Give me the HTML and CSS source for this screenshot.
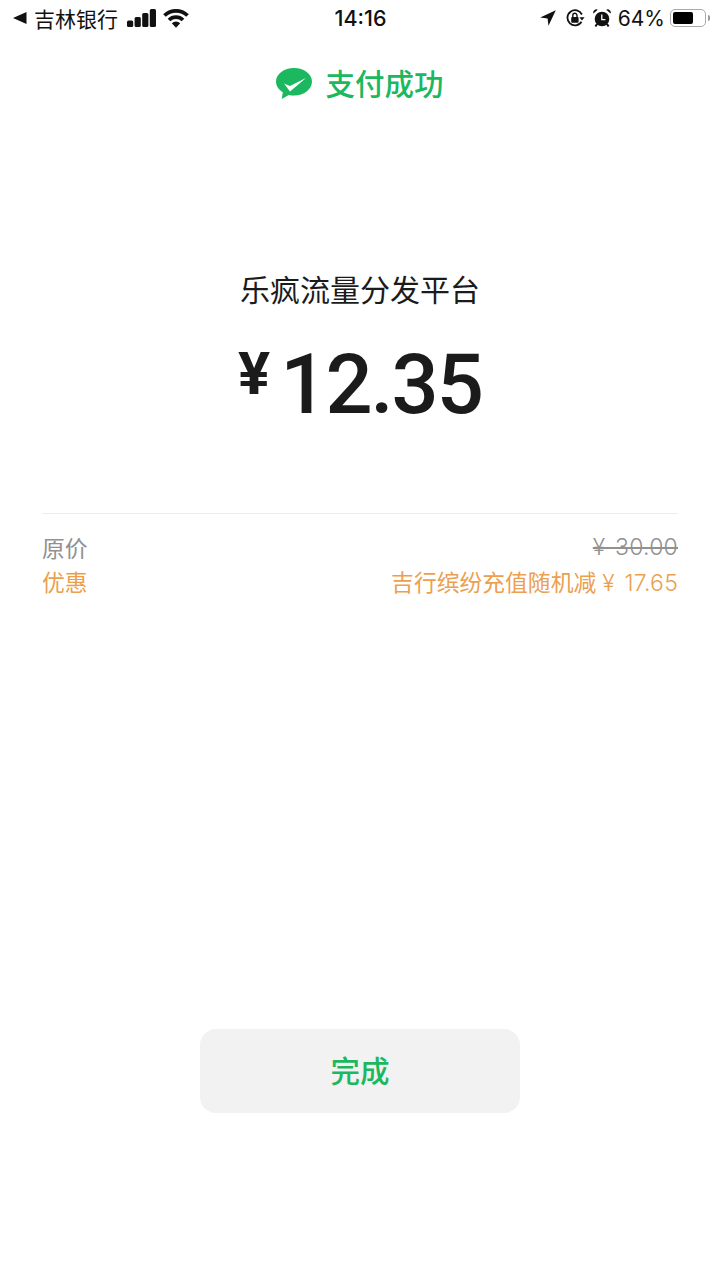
FILE: index.html
```html
<!DOCTYPE html>
<html lang="zh-CN">

<head>
	<meta charset="utf-8">
	<meta name="viewport" content="width=device-width, initial-scale=1.0">
	<title>支付成功</title>
	<link rel="stylesheet" href="styles.css">
</head>

<body>
	<header class="status_bar">
		<div class="status_left">
			<svg class="back_icon" width="14" height="12" viewBox="0 0 14 12"><path d="M0 6 13.5 0V12Z" fill="#111"/></svg>
			<span class="carrier">吉林银行</span>
			<svg class="signal_icon" width="30" height="18" viewBox="0 0 30 18">
				<rect x="0" y="11.500" width="6.200" height="6.500" rx="1.500" fill="#111"/>
				<rect x="7.600" y="8" width="6.200" height="10" rx="1.500" fill="#111"/>
				<rect x="15.200" y="4" width="6.200" height="14" rx="1.500" fill="#111"/>
				<rect x="22.800" y="0" width="6.200" height="18" rx="1.500" fill="#111"/>
			</svg>
			<svg class="wifi_icon" width="26" height="20" viewBox="0 0 26 20">
				<path d="M1.500 7.500a16.500 16.500 0 0 1 23 0" fill="none" stroke="#111" stroke-width="3.800"/>
				<path d="M6 12a10 10 0 0 1 14 0" fill="none" stroke="#111" stroke-width="3.800"/>
				<path d="M8.800 15.200a5.800 5.800 0 0 1 8.400 0L13 19.800Z" fill="#111"/>
			</svg>
		</div>
		<div class="clock">14:16</div>
		<div class="status_right">
			<svg width="16" height="16" viewBox="0 0 16 16"><path d="M15.800 .2 .2 7.500 7.600 8.400 8.500 15.800Z" fill="#111"/></svg>
			<svg class="lock_icon" width="19" height="18" viewBox="0 0 19 18">
				<path d="M15.500 12.800A7.600 7.600 0 1 1 15.900 5.500" fill="none" stroke="#111" stroke-width="1.800"/>
				<path d="M13.400 8.200h5.200l-2.600 3.400Z" fill="#111"/>
				<rect x="5.200" y="8" width="7.400" height="5.800" rx="1" fill="#111"/>
				<path d="M6.800 8V6.400a2.100 2.100 0 0 1 4.200 0V8" fill="none" stroke="#111" stroke-width="1.400"/>
			</svg>
			<svg class="alarm_icon" width="18" height="18" viewBox="0 0 18 18">
				<circle cx="9" cy="10" r="7.300" fill="#111"/>
				<path d="M.4 4.600 4.800 .8A3.100 3.100 0 0 0 .4 4.600ZM17.600 4.600 13.200 .8A3.100 3.100 0 0 1 17.600 4.600Z" fill="#111"/>
				<path d="M4 15 2.400 17.500M14 15 15.600 17.500" stroke="#111" stroke-width="2"/>
				<path d="M8.800 5.600V10.600H12.400" fill="none" stroke="#fff" stroke-width="1.300"/>
			</svg>
			<span class="battery_text">64%</span>
			<div class="battery">
				<div class="battery_level"></div>
			</div>
			<div class="battery_nub"></div>
		</div>
	</header>

	<main>
		<div class="result_title">
			<svg class="wechat_icon" width="36" height="32" viewBox="0 0 36 32">
				<path d="M18 0C8 0 0 5.900 0 13.500 0 17.900 2.700 21.700 6.800 24.200L5.800 31 12.800 27C14.500 27.400 16.200 27.600 18 27.600 28 27.600 36 21.200 36 13.500 36 5.900 28 0 18 0Z" fill="#1bb85f"/>
				<path d="M8 15.500 14 18 30 10 14 23.500Z" fill="#fff"/>
			</svg>
			<span class="title_text">支付成功</span>
		</div>

		<h1 class="merchant">乐疯流量分发平台</h1>
		<div class="amount"><span class="yen">¥</span><span class="amount_value">12.35</span></div>

		<section class="details">
			<div class="detail_row muted">
				<span>原价</span>
				<s class="num">¥ 30.00</s>
			</div>
			<div class="detail_row discount">
				<span>优惠</span>
				<span>吉行缤纷充值随机减<span class="num discount_num">¥ 17.65</span></span>
			</div>
		</section>

		<button class="done_button">完成</button>
	</main>
</body>

</html>
```

FILE: styles.css
```css
* {
	margin: 0;
	box-sizing: border-box;
}

body {
	width: 720px;
	height: 1280px;
	background: #fff;
	color: #1b1b1b;
	font-family: "Noto Sans CJK SC", "Noto Sans", sans-serif;
	overflow: hidden;
}

.status_bar {
	display: grid;
	grid-template-columns: 1fr auto 1fr;
	align-items: center;
	height: 36px;
	padding: 0 10px 0 13px;
	color: #111;
}

.status_left,
.status_right {
	display: flex;
	align-items: center;
}

.status_right {
	justify-content: flex-end;
}

.carrier {
	margin: 0 9px 0 7px;
	font-size: 21px;
	line-height: 1;
}

.wifi_icon {
	margin-left: 6px;
}

.clock {
	margin-right: 2px;
	font-family: Inter, sans-serif;
	font-size: 21.500px;
	font-weight: 500;
}

.lock_icon {
	margin-left: 10px;
}

.alarm_icon {
	margin-left: 8px;
}

.battery_text {
	margin-left: 7px;
	font-family: Inter, sans-serif;
	font-size: 21px;
}

.battery {
	width: 36px;
	height: 18px;
	margin-left: 5px;
	padding: 2px;
	border: 1.500px solid #aaa;
	border-radius: 5px;
}

.battery_level {
	width: 20px;
	height: 100%;
	background: #000;
	border-radius: 2px;
}

.battery_nub {
	width: 2px;
	height: 6px;
	margin-left: 2px;
	background: #999;
	border-radius: 0 2px 2px 0;
}

main {
	display: flex;
	flex-direction: column;
	align-items: center;
}

.result_title {
	display: flex;
	align-items: center;
	gap: 13px;
	height: 40px;
	margin-top: 28px;
	color: #1bb85f;
	font-size: 29.500px;
	font-weight: 500;
}

.title_text {
	margin-top: -4px;
}

.merchant {
	margin-top: 160px;
	font-size: 30px;
	font-weight: 400;
	line-height: 48px;
}

.amount {
	display: flex;
	align-items: flex-start;
	height: 90px;
	margin-top: 28px;
	font-family: Roboto, sans-serif;
	font-weight: 500;
}

.yen {
	margin-right: 10px;
	font-size: 60px;
	font-weight: 700;
	line-height: 68px;
}

.amount_value {
	font-size: 83px;
	line-height: 90px;
	letter-spacing: -2px;
}

.details {
	width: 636px;
	margin-top: 83px;
	padding-top: 16px;
	border-top: 1px solid #ececec;
	font-size: 22.800px;
}

.detail_row {
	display: flex;
	justify-content: space-between;
	align-items: center;
	height: 34.500px;
}

.num {
	font-family: Inter, sans-serif;
	font-size: 23px;
	font-weight: 300;
	letter-spacing: 0.200px;
	word-spacing: 3px;
}

.discount_num {
	margin-left: 6px;
}

.muted {
	color: #919191;
}

.discount {
	color: #ec9f50;
}

.done_button {
	width: 320px;
	height: 84px;
	margin-top: 430px;
	padding-bottom: 5px;
	border: none;
	border-radius: 16px;
	background: #f2f2f2;
	color: #1bb85f;
	font-family: inherit;
	font-size: 29.500px;
	font-weight: 500;
}
```
